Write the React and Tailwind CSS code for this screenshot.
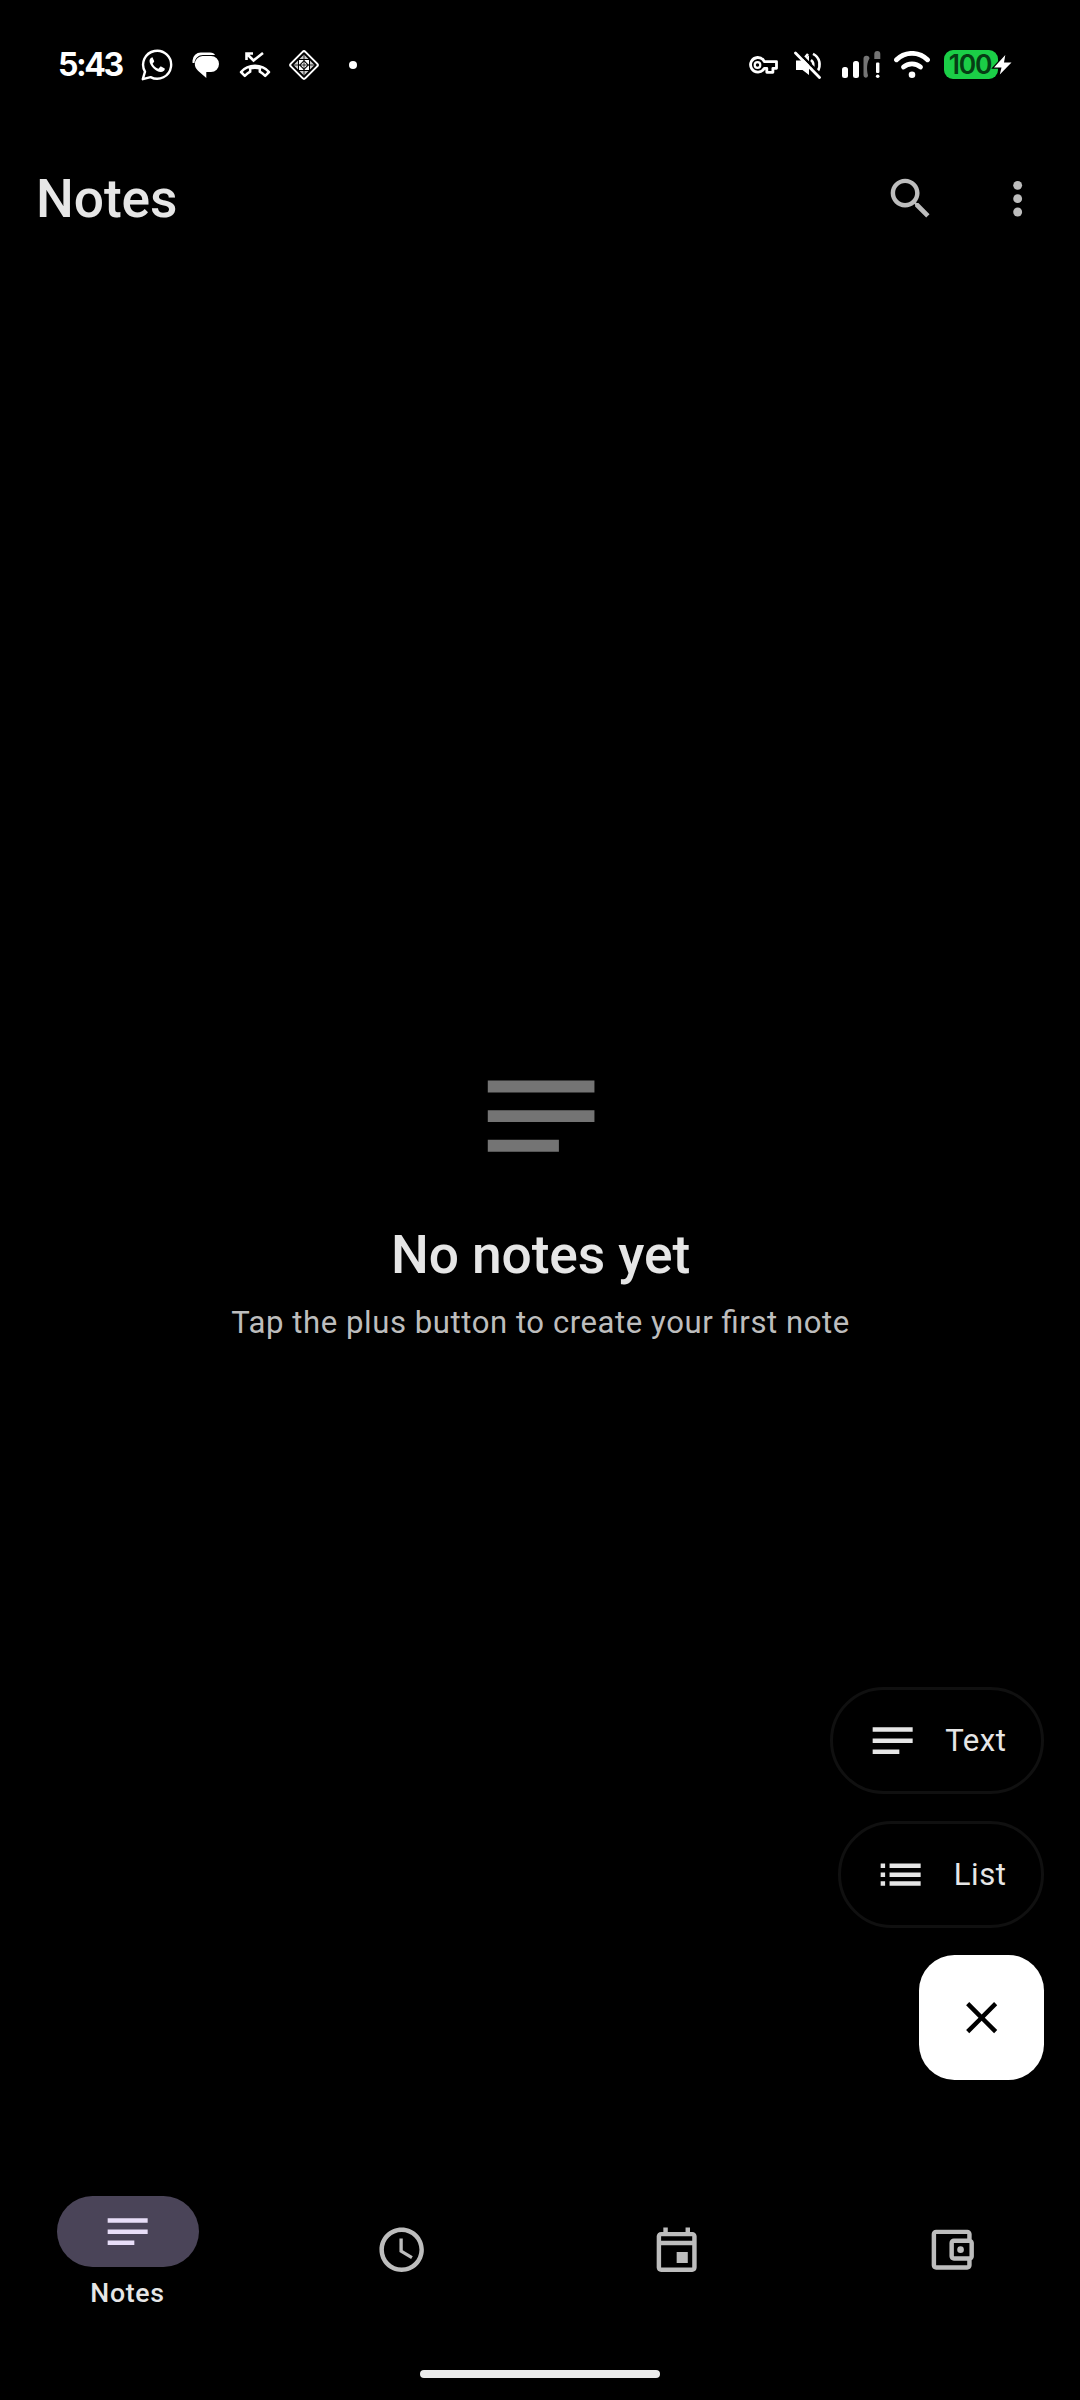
import React from "react";

const NOTES_PATH = "M3 18h12v-2H3v2zM3 6v2h18V6H3zm0 7h18v-2H3v2z";

function Icon({ d, className = "size-[53.33px]", children }) {
  return (
    <svg viewBox="0 0 24 24" fill="currentColor" className={`${className} shrink-0`}>
      {d && <path d={d} />}
      {children}
    </svg>
  );
}

function StatusBar() {
  return (
    <div className="flex h-[127px] items-center pt-[2px] pr-[67px] pl-[58px] text-white">
      <div className="w-[83px] font-['Inter',sans-serif] text-[32px] leading-none font-bold tracking-[-2.4px]">
        5:43
      </div>
      {/* WhatsApp */}
      <svg viewBox="0 0 32 32" className="size-[32px] shrink-0" fill="none">
        <path d="M1.8 30.2 4 22.7A14 14 0 1 1 9.6 28.1Z" stroke="#fff" strokeWidth="2.4" strokeLinejoin="round" />
        <path d="M10.7 8.8c-1.1 0-2.2 1.3-2.2 3.2 0 4.5 6.7 11 11.3 11 2.2 0 4-1.3 4-2.9 0-.5-.1-.7-.5-.9l-3.2-1.6c-.5-.2-.8-.1-1.1.3l-1.3 1.6c-.3.3-.6.3-1 .1-2-.9-3.8-2.5-4.900-4.500-.2-.4-.1-.7.2-1l1-1.200c.2-.3.2-.6.1-.9l-1.400-3.200c-.2-.4-.4-.5-1-.5Z" fill="#fff" />
      </svg>
      {/* Chat bubbles */}
      <svg viewBox="0 0 28 28" className="ml-[19px] size-[28px] shrink-0">
        <path d="M.5 12V9.5A8.3 8.3 0 0 1 9 1.500h9c2.600 0 4.400.9 5 2.600l-12-.2C6.500 3.900 3 7 2.500 12Z" fill="#fff" />
        <path d="M10.500 5H19a8 8 0 0 1 0 16h-4.700v6L6 19.700C3.800 17.600 2.800 15.500 2.800 13A8 8 0 0 1 10.500 5Z" fill="#fff" />
      </svg>
      {/* Missed call */}
      <svg viewBox="0 0 32 28" className="ml-[19px] h-[28px] w-[32px] shrink-0" fill="none" stroke="#fff">
        <path d="M7.500 9V2.500H14M7.500 2.500 14.500 9.500 24 2" strokeWidth="2.600" />
        <path d="M11.200 17.400C14.400 16.500 17.600 16.500 20.800 17.400V20.700C22.800 21.800 24.600 23.200 26.200 24.800L30 21C26.300 16.800 21.300 14.800 16 14.800S5.700 16.800 2 21L5.800 24.800C7.400 23.200 9.200 21.800 11.200 20.700Z" strokeWidth="2.500" strokeLinejoin="round" />
      </svg>
      {/* Patterned diamond */}
      <svg viewBox="0 0 32 32" className="ml-[17px] size-[32px] shrink-0" fill="none">
        <rect x="5.700" y="5.700" width="20.600" height="20.600" rx="2" transform="rotate(45 16 16)" stroke="#fff" strokeWidth="2" />
        <path d="M16 5.500 20.500 10H11.500ZM16 26.500 20.500 22H11.500ZM5.500 16 10 11.500V20.500ZM26.500 16 22 11.500V20.500Z" fill="#ccc" />
        <path d="M11 11H16L11 16ZM21 11V16L16 11ZM21 21H16L21 16ZM11 21V16L16 21ZM16 12.500 19.500 16 16 19.500 12.500 16Z" fill="#fff" />
        <path d="M16 6V26M6 16H26" stroke="#000" strokeWidth=".8" />
      </svg>
      <div className="ml-[29px] size-[8px] rounded-full bg-white" />

      <div className="ml-auto flex items-center">
        {/* VPN key */}
        <svg viewBox="0 0 29 18" className="h-[18px] w-[29px]" fill="none" stroke="#fff">
          <path d="M8.500 1.500A7.300 7.300 0 1 0 15.300 12.300H17.800V16.300H23.900V12.300H27.500V5.600H15.300A7.300 7.300 0 0 0 8.500 1.500Z" strokeWidth="2.800" strokeLinejoin="round" />
          <circle cx="8.500" cy="9" r="2.800" strokeWidth="2.200" />
        </svg>
        {/* Muted speaker */}
        <svg viewBox="0 0 28 28" className="ml-[16px] size-[28px]" fill="none">
          <path d="M2 9.500H7L15 4.500V24L8.500 19H2Z" fill="#fff" />
          <path d="M17 9C19.500 11 20 14 18.500 17.500M19 2.800C26.500 6.500 27 15 23.500 20.500M11 6.500 14 3" stroke="#fff" strokeWidth="2.600" />
          <path d="M3.500.5 27.500 24.500" stroke="#000" strokeWidth="2.600" />
          <path d="M1.500 2 25.500 26.500" stroke="#fff" strokeWidth="2.800" strokeLinecap="round" />
        </svg>
        {/* Cellular signal */}
        <svg viewBox="0 0 39 28" className="ml-[20px] h-[28px] w-[39px]">
          <rect x="0" y="16" width="6" height="11" rx="2.500" fill="#fff" />
          <rect x="11" y="10" width="6" height="17" rx="2.500" fill="#fff" />
          <path d="M21.500 8A3 3 0 0 1 27.500 7.500C25 11 24.300 18 26 24.500 25.500 28 21.500 27 21.500 24Z" fill="#757575" />
          <path d="M32.300 3A3 3 0 0 1 38.300 3V8H32.300Z" fill="#757575" />
          <rect x="34" y="11.500" width="3.400" height="10.500" rx="1" fill="#fff" />
          <circle cx="35.700" cy="25.200" r="1.800" fill="#fff" />
        </svg>
        {/* Wi-Fi */}
        <svg viewBox="0 0 36 28" className="ml-[13px] h-[28px] w-[36px]" fill="none" stroke="#fff" strokeLinecap="round">
          <path d="M2.500 8.800C11 .2 25 .2 33.500 8.800" strokeWidth="4.800" />
          <path d="M9.500 16C14 11.700 22 11.700 26.500 16" strokeWidth="4.800" />
          <circle cx="18" cy="23.800" r="3.300" fill="#fff" stroke="none" />
        </svg>
        {/* Battery */}
        <div className="relative ml-[14px] flex h-[29px] w-[69px] items-center">
          <div className="flex h-[29px] w-[54px] items-center justify-center rounded-[9px] bg-[#1bce47] pr-[2px] font-['Inter',sans-serif] text-[26.500px] leading-none font-semibold tracking-[-1.2px] text-[#063d14]">
            100
          </div>
          <svg viewBox="0 0 20 24" className="absolute top-[4px] left-[49px] h-[24px] w-[20px] overflow-visible">
            <path d="M12.300 1 1 13.500H8.500L6.800 20.500 18.500 8.500H11Z" fill="#fff" stroke="#000" strokeWidth="2.500" paintOrder="stroke" />
          </svg>
        </div>
      </div>
    </div>
  );
}

function Header() {
  return (
    <header className="flex h-[142px] items-center pr-[36px] pl-[36px]">
      <h1 className="flex-1 pt-[2px] text-[53.33px] leading-[71px] font-medium tracking-[-0.1px] text-[#e6e6e6]">Notes</h1>
      <div className="flex items-center gap-[53.33px] pt-[1px] text-[#bdbdbd]">
        <Icon d="M15.500 14h-.79l-.28-.27C15.410 12.590 16 11.110 16 9.500 16 5.910 13.090 3 9.500 3S3 5.910 3 9.500 5.910 16 9.500 16c1.610 0 3.090-.59 4.230-1.570l.27.28v.79l5 4.990L20.490 19l-4.990-5zm-6 0C7.010 14 5 11.990 5 9.500S7.010 5 9.500 5 14 7.010 14 9.500 11.990 14 9.500 14z" />
        <Icon>
          <circle cx="12" cy="6" r="2" />
          <circle cx="12" cy="12" r="2" />
          <circle cx="12" cy="18" r="2" />
        </Icon>
      </div>
    </header>
  );
}

function EmptyState() {
  return (
    <section className="flex flex-col items-center pt-[776px]">
      <Icon d={NOTES_PATH} className="ml-[2px] size-[142.220px] text-[#747474]" />
      <h2 className="mt-[33px] ml-[1px] text-[53.33px] leading-[71px] font-medium tracking-[-0.1px] text-[#e6e6e6]">No notes yet</h2>
      <p className="mt-[10px] ml-[1px] text-[31.110px] leading-[44px] tracking-[0.55px] text-[#bdbdbd] [font-feature-settings:'liga']">
        Tap the plus button to create your first note
      </p>
    </section>
  );
}

function ActionPill({ d, label }) {
  return (
    <button className="flex h-[107px] items-center gap-[26px] rounded-full border-[3px] border-[#101010] pr-[34.500px] pl-[33px] text-[31.110px] leading-[44px] tracking-[0.55px] text-[#e6e6e6]">
      <Icon d={d} />
      <span>{label}</span>
    </button>
  );
}

function NavItem({ active, label, children }) {
  return (
    <div className="flex flex-1 flex-col items-center">
      {active ? (
        <>
          <div className="mt-[27px] flex h-[71px] w-[142px] items-center justify-center rounded-full bg-[#4a4458] pr-[2px] text-[#e8def8]">
            {children}
          </div>
          <span className="mt-[9px] mr-[1.500px] text-[26.670px] leading-[35.500px] font-medium tracking-[0.700px] text-[#e6e6e6]">{label}</span>
        </>
      ) : (
        <div className="mt-[53.700px] text-[#bdbdbd]">{children}</div>
      )}
    </div>
  );
}

export default function App() {
  return (
    <div className="flex h-[2400px] w-[1080px] flex-col overflow-hidden bg-black font-['Roboto',sans-serif]">
      <StatusBar />
      <Header />
      <main className="flex flex-1 flex-col">
        <EmptyState />
        <div className="mt-auto mr-[36px] mb-[89px] flex flex-col items-end gap-[27px]">
          <ActionPill label="Text" d={NOTES_PATH} />
          <ActionPill label="List" d="M3 13h2v-2H3v2zm0 4h2v-2H3v2zm0-8h2V7H3v2zm4 4h14v-2H7v2zm0 4h14v-2H7v2zM7 7v2h14V7H7z" />
          <button className="flex size-[125px] items-center justify-center rounded-[35.500px] bg-white text-black">
            <Icon d="M19 6.410L17.590 5 12 10.590 6.410 5 5 6.410 10.590 12 5 17.590 6.410 19 12 13.410 17.590 19 19 17.590 13.410 12z" />
          </button>
        </div>
      </main>
      <nav className="flex h-[178px] gap-[17.800px]">
        <NavItem active label="Notes">
          <Icon d={NOTES_PATH} />
        </NavItem>
        <NavItem>
          <Icon className="mr-[2.400px] size-[53.33px]" d="M11.990 2C6.470 2 2 6.480 2 12s4.470 10 9.990 10C17.520 22 22 17.520 22 12S17.520 2 11.990 2zM12 20c-4.420 0-8-3.580-8-8s3.580-8 8-8 8 3.580 8 8-3.580 8-8 8zM12.500 7H11v6l5.250 3.150.75-1.230-4.500-2.670z" />
        </NavItem>
        <NavItem>
          <Icon className="mr-[1.600px] size-[53.33px]" d="M19 4h-1V2h-2v2H8V2H6v2H5c-1.110 0-1.990.9-1.990 2L3 20c0 1.100.89 2 2 2h14c1.100 0 2-.9 2-2V6c0-1.100-.9-2-2-2zm0 16H5V10h14v10zm0-12H5V6h14v2zM12 13h5v5h-5z" />
        </NavItem>
        <NavItem>
          <Icon d="M21 7.280V5c0-1.100-.9-2-2-2H5c-1.110 0-2 .9-2 2v14c0 1.100.89 2 2 2h14c1.100 0 2-.9 2-2v-2.280c.59-.35 1-.98 1-1.720V9c0-.74-.41-1.380-1-1.720zM20 9v6h-7V9h7zM5 19V5h14v2h-6c-1.100 0-2 .9-2 2v6c0 1.100.9 2 2 2h6v2H5z">
            <circle cx="16" cy="12" r="1.500" />
          </Icon>
        </NavItem>
      </nav>
      <div className="flex h-[53px] items-center justify-center">
        <div className="h-[8px] w-[240px] rounded-full bg-[#ebebeb]" />
      </div>
    </div>
  );
}
